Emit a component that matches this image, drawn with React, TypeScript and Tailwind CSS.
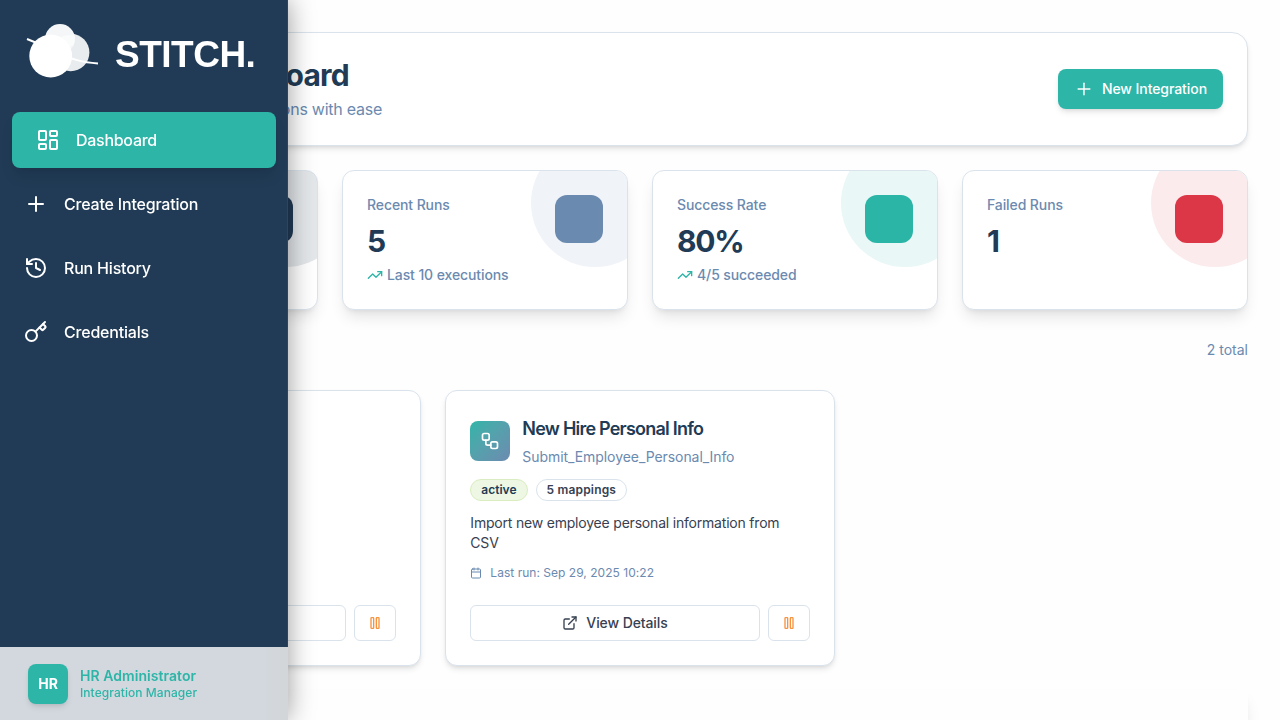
import type { ReactNode } from "react";
import {
  Calendar,
  ExternalLink,
  History,
  Key,
  LayoutDashboard,
  Plus,
  TrendingUp,
  Workflow,
} from "lucide-react";

function PauseIcon() {
  return (
    <svg width="16" height="16" viewBox="0 0 24 24" fill="none" stroke="currentColor" strokeWidth="2">
      <rect x="6" y="4" width="4" height="16" rx="1" />
      <rect x="14" y="4" width="4" height="16" rx="1" />
    </svg>
  );
}

function Logo() {
  return (
    <div className="flex h-[100px] items-start pl-6 pt-5">
      <svg width="80" height="64" viewBox="24 20 80 64" fill="none">
        <path d="M27 39 L38 43.5" stroke="#fff" strokeWidth="2" />
        <circle cx="70.7" cy="52.5" r="18.7" fill="#e8ecef" />
        <circle cx="60" cy="39" r="15" fill="#f4f6f7" />
        <path d="M55 52 L73.4 45.5 A15 15 0 0 0 74.6 35.6 A18.7 18.7 0 0 0 55 42 Z" fill="#fafbfb" />
        <circle cx="50.7" cy="56" r="21.4" fill="#fff" />
        <path d="M70 58 L78 60.4 C84 62.2 91 63 98 63.4" stroke="#fff" strokeWidth="2" />
      </svg>
      <span className="ml-[11px] mt-[13px] font-['Liberation_Sans',Arial,sans-serif] text-[37px] font-bold leading-[44px] tracking-[-0.5px] text-white">
        STITCH.
      </span>
    </div>
  );
}

function NavItem({ icon, label, active }: { icon: ReactNode; label: string; active?: boolean }) {
  return (
    <a
      className={
        active
          ? "flex h-14 items-center gap-4 rounded-lg bg-[#2db5a8] px-6 text-base font-medium tracking-[-0.28px] text-white shadow-lg"
          : "flex h-14 items-center gap-4 rounded-lg px-3 text-base font-medium tracking-[-0.2px] text-white"
      }
    >
      {icon}
      <span>{label}</span>
    </a>
  );
}

function Sidebar() {
  return (
    <aside className="fixed inset-y-0 left-0 z-10 flex w-72 flex-col border-r border-[#2d4560] bg-[#213b56] shadow-[0_0_25px_rgba(0,0,0,0.4)]">
      <Logo />
      <nav className="flex w-[288px] flex-1 flex-col gap-2 px-3 pt-3">
        <NavItem active icon={<LayoutDashboard size={24} />} label="Dashboard" />
        <NavItem icon={<Plus size={24} />} label="Create Integration" />
        <NavItem icon={<History size={24} />} label="Run History" />
        <NavItem icon={<Key size={24} />} label="Credentials" />
      </nav>
      <div className="-mr-px flex h-[73px] items-center gap-3 bg-linear-to-r from-[#d3d8df] from-90% to-[#d2d6d8] pl-7">
        <div className="flex size-10 items-center justify-center rounded-lg bg-[#2db5a8] text-sm font-bold text-white shadow-md">
          HR
        </div>
        <div className="pt-px text-[#2db5a8]">
          <p className="text-sm font-semibold leading-[18px] tracking-[0.05px]">HR Administrator</p>
          <p className="text-xs font-medium leading-4 tracking-[0.06px]">Integration Manager</p>
        </div>
      </div>
    </aside>
  );
}

type Stat = { title: string; value: string; note?: string; solid: string; tint: string };

const stats: Stat[] = [
  { title: "Integrations", value: "2", solid: "bg-[#213b56]", tint: "bg-[#213b56]/12" },
  { title: "Recent Runs", value: "5", note: "Last 10 executions", solid: "bg-[#6b8ab0]", tint: "bg-[#f0f3f8]" },
  { title: "Success Rate", value: "80%", note: "4/5 succeeded", solid: "bg-[#2ab5a7]", tint: "bg-[#e9f7f6]" },
  { title: "Failed Runs", value: "1", solid: "bg-[#db3747]", tint: "bg-[#fbebec]" },
];

function StatCard({ title, value, note, solid, tint }: Stat) {
  return (
    <div className="relative flex h-[140px] justify-between overflow-hidden rounded-xl border border-[#dae3ec] bg-white p-6 shadow-lg">
      <div className={`absolute -right-8 -top-8 size-32 rounded-full ${tint}`} />
      <div>
        <p className="text-sm font-medium leading-5 tracking-[-0.1px] text-[#6b8ab0]">{title}</p>
        <p className="mt-2 text-3xl font-bold leading-9 tracking-[-1.2px] text-[#213b56]">{value}</p>
        {note && (
          <p className="mt-1.5 flex items-center gap-1 text-sm font-medium leading-5 tracking-[-0.1px] text-[#6b8ab0]">
            <TrendingUp size={16} className="text-[#2db5a8]" />
            {note}
          </p>
        )}
      </div>
      <div className={`relative size-12 rounded-xl ${solid}`} />
    </div>
  );
}

type Integration = { name: string; form: string; mappings: string; about: string; lastRun: string };

const integrations: Integration[] = [
  { name: "Payroll", form: "Payroll", mappings: "5 mappings", about: "Payroll", lastRun: "Never" },
  {
    name: "New Hire Personal Info",
    form: "Submit_Employee_Personal_Info",
    mappings: "5 mappings",
    about: "Import new employee personal information from CSV",
    lastRun: "Last run: Sep 29, 2025 10:22",
  },
];

function IntegrationCard({ name, form, mappings, about, lastRun }: Integration) {
  return (
    <div className="flex h-[276px] flex-col rounded-xl border border-[#dae3ec] bg-white p-6 shadow-md">
      <div className="flex items-center gap-3">
        <div className="flex size-10 shrink-0 items-center justify-center rounded-lg bg-linear-to-br from-[#2db5a8] to-[#6b8ab0] text-white">
          <Workflow size={20} />
        </div>
        <div>
          <p className="text-lg font-semibold leading-7 tracking-[-0.78px] text-[#213b56]">{name}</p>
          <p className="mt-1 text-sm leading-5 tracking-[-0.07px] text-[#6b8ab0]">{form}</p>
        </div>
      </div>
      <div className="mt-3 flex gap-2 text-xs font-semibold leading-4">
        <span className="rounded-full border border-[#d9edc0] bg-[#eef7e3] px-2.5 py-0.5 text-[#213b56]">active</span>
        <span className="rounded-full border border-[#dae3ec] px-2.5 py-0.5 tracking-[0.18px] text-[#374151]">
          {mappings}
        </span>
      </div>
      <p className="mt-3 text-sm leading-5 tracking-[-0.2px] text-[#374151]">{about}</p>
      <p className="mt-3 flex items-center gap-2 text-xs leading-4 tracking-[0.03px] text-[#6b8ab0]">
        <Calendar size={12} />
        {lastRun}
      </p>
      <div className="mt-auto flex gap-2">
        <button className="flex h-9 flex-1 items-center justify-center gap-2 rounded-md border border-[#dae3ec] bg-white text-sm font-medium tracking-[-0.1px] text-[#374151]">
          <ExternalLink size={16} />
          View Details
        </button>
        <button className="flex h-9 w-[42px] items-center justify-center rounded-md border border-[#dae3ec] bg-white text-[#f8923c]">
          <PauseIcon />
        </button>
      </div>
    </div>
  );
}

export default function App() {
  return (
    <div className="h-screen overflow-hidden bg-[#fefefe] font-['Inter',sans-serif] antialiased">
      <Sidebar />
      <main className="p-8">
        <header className="flex h-[114px] items-center justify-between rounded-2xl border border-[#dae3ec] bg-white px-6 shadow-md">
          <div className="text-right">
            <h1 className="w-[292px] whitespace-nowrap text-3xl font-bold leading-9 tracking-[-0.75px] text-[#213b56]">
              Dashboard
            </h1>
            <p className="mt-1 w-[325px] whitespace-nowrap text-base leading-6 tracking-[-0.25px] text-[#6b8ab0]">
              Manage your integrations with ease
            </p>
          </div>
          <button className="flex h-10 items-center gap-2 rounded-lg bg-[#2db5a8] px-4 text-sm font-medium tracking-[-0.07px] text-white shadow-md">
            <Plus size={20} strokeWidth={1.7} />
            New Integration
          </button>
        </header>
        <section className="mt-6 grid grid-cols-4 gap-6">
          {stats.map((s) => (
            <StatCard key={s.title} {...s} />
          ))}
        </section>
        <div className="mt-6 flex h-8 items-center justify-between">
          <h2 className="text-2xl font-bold text-[#213b56]">Integrations</h2>
          <span className="text-sm text-[#6b8ab0]">2 total</span>
        </div>
        <section className="mt-6 grid grid-cols-3 gap-6">
          {integrations.map((i) => (
            <IntegrationCard key={i.name} {...i} />
          ))}
        </section>
        <section className="mt-6 h-40 bg-[#fefefe] shadow-lg" />
      </main>
    </div>
  );
}
